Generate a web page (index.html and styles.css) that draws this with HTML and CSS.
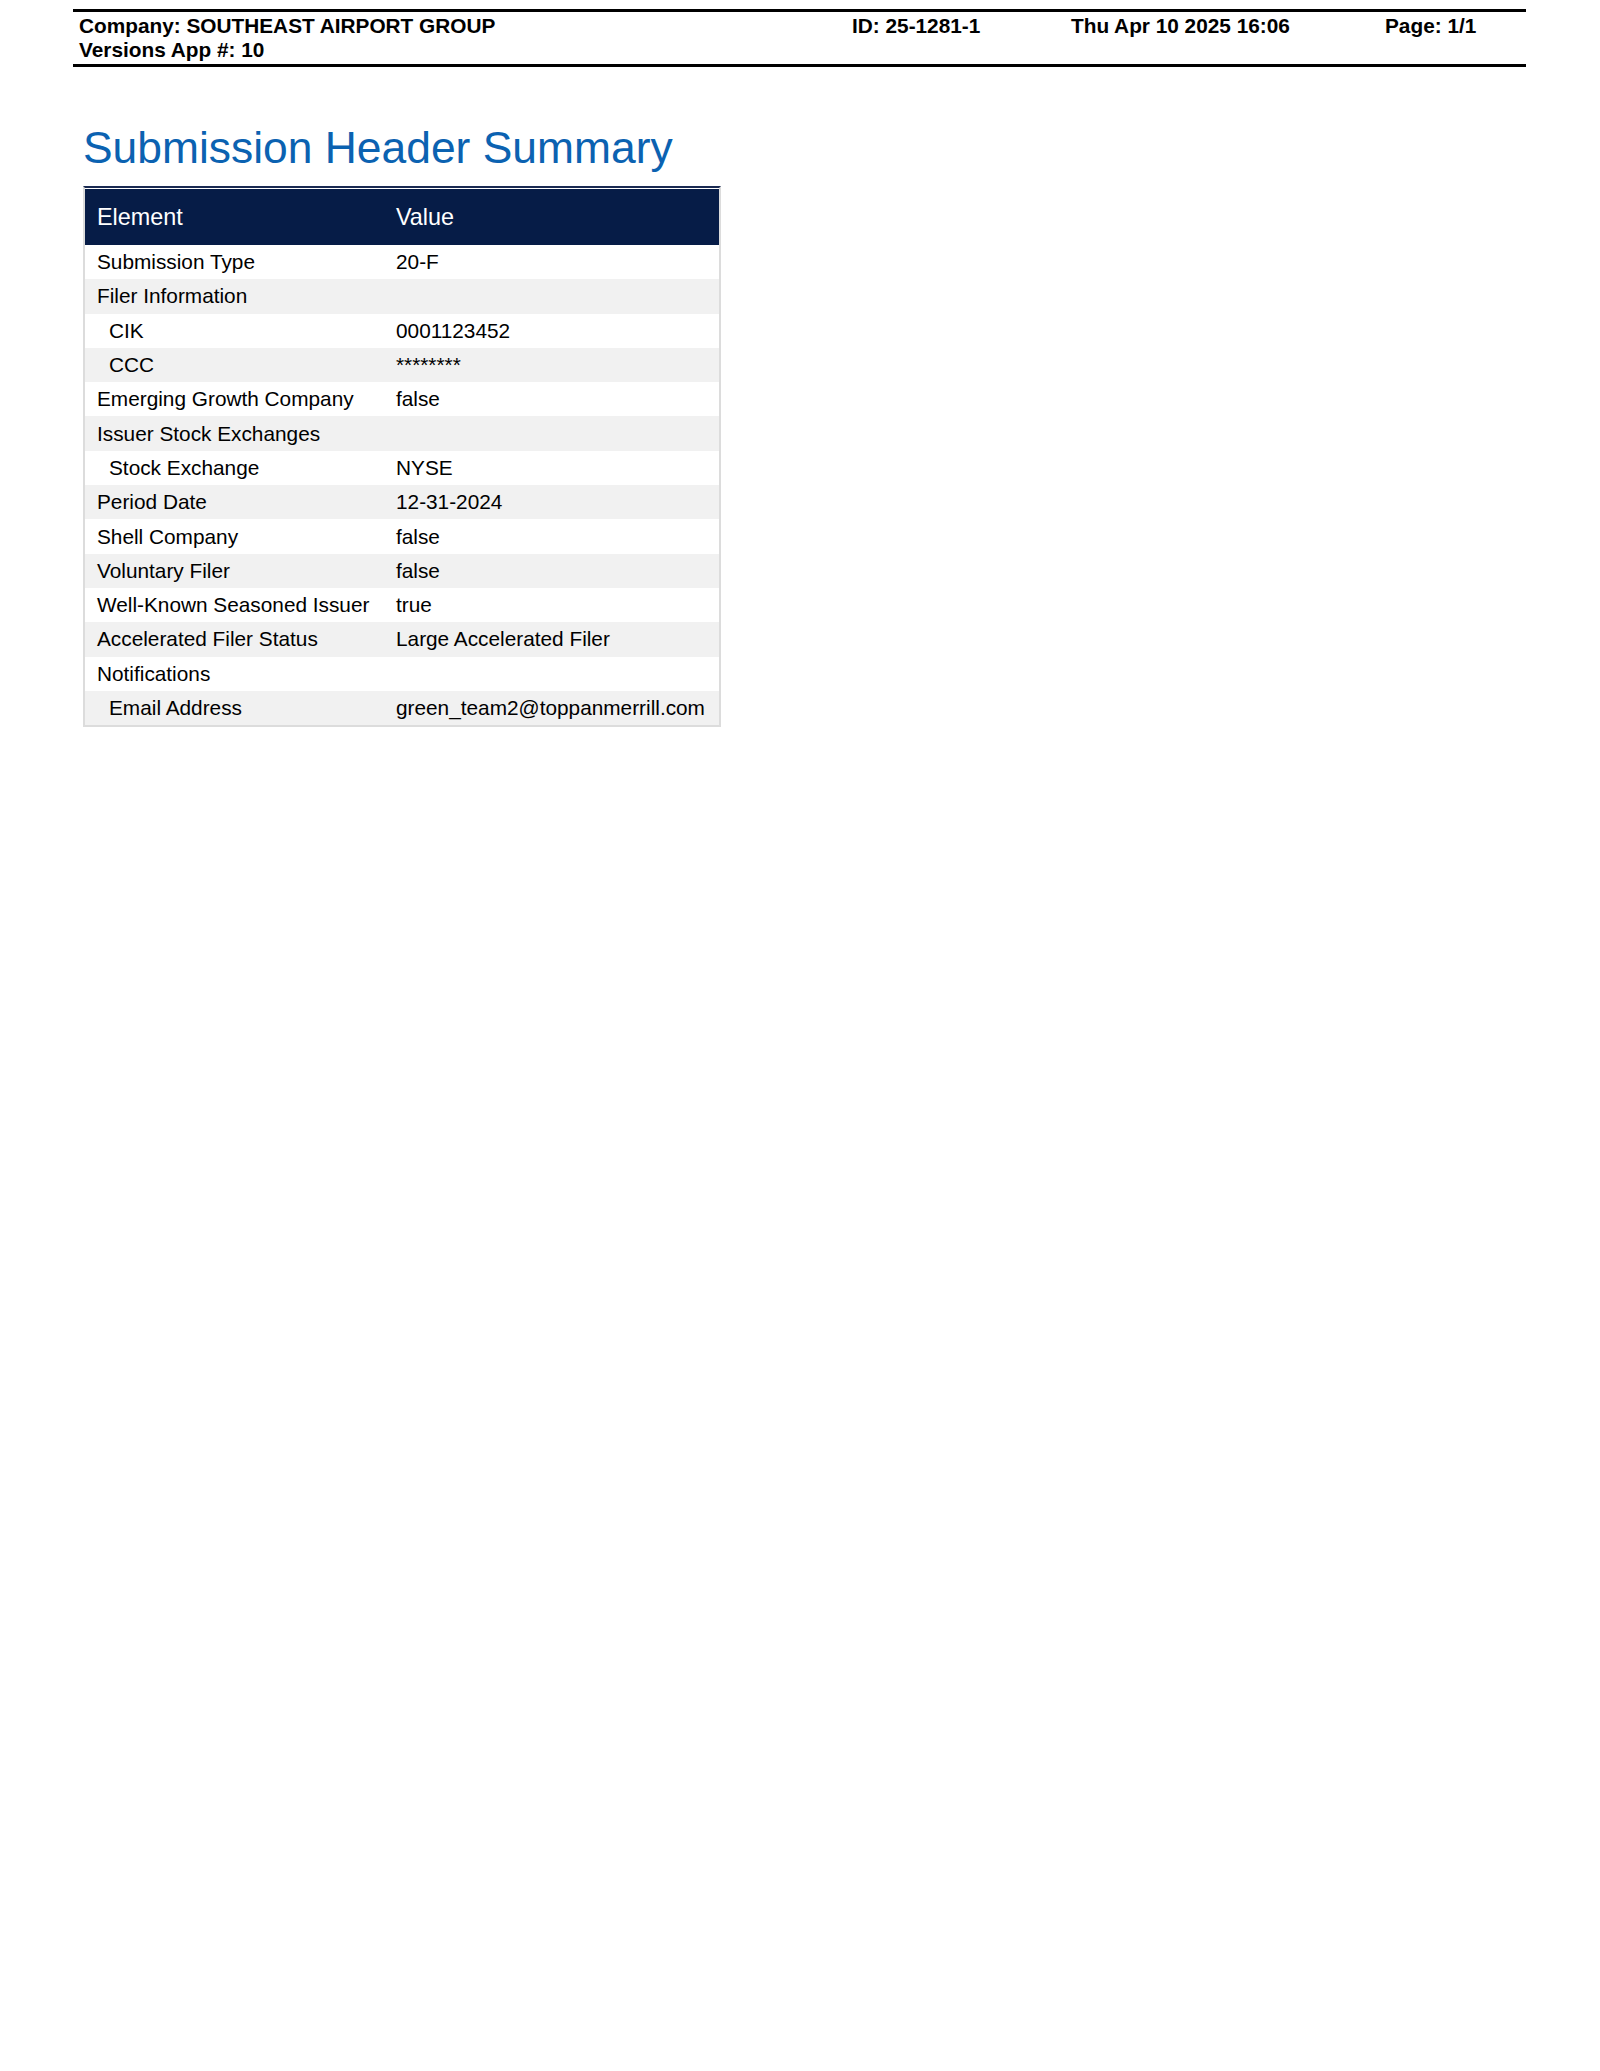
FILE: index.html
```html
<!DOCTYPE html>
<html lang="en">
<head>
<meta charset="utf-8">
<title>Submission Header Summary</title>
<link rel="stylesheet" href="styles.css">
</head>
<body>
<div class="page">
  <header class="doc-header">
    <div class="dh-left">
      <div>Company: SOUTHEAST AIRPORT GROUP</div>
      <div>Versions App #: 10</div>
    </div>
    <div class="dh-id">ID: 25-1281-1</div>
    <div class="dh-date">Thu Apr 10 2025 16:06</div>
    <div class="dh-page">Page: 1/1</div>
  </header>

  <h1 class="title">Submission Header Summary</h1>

  <table class="summary">
    <colgroup>
      <col class="c-el">
      <col class="c-val">
    </colgroup>
    <thead>
      <tr><th>Element</th><th>Value</th></tr>
    </thead>
    <tbody>
      <tr><td>Submission Type</td><td>20-F</td></tr>
      <tr><td>Filer Information</td><td></td></tr>
      <tr><td class="ind">CIK</td><td>0001123452</td></tr>
      <tr><td class="ind">CCC</td><td>********</td></tr>
      <tr><td>Emerging Growth Company</td><td>false</td></tr>
      <tr><td>Issuer Stock Exchanges</td><td></td></tr>
      <tr><td class="ind">Stock Exchange</td><td>NYSE</td></tr>
      <tr><td>Period Date</td><td>12-31-2024</td></tr>
      <tr><td>Shell Company</td><td>false</td></tr>
      <tr><td>Voluntary Filer</td><td>false</td></tr>
      <tr><td>Well-Known Seasoned Issuer</td><td>true</td></tr>
      <tr><td>Accelerated Filer Status</td><td>Large Accelerated Filer</td></tr>
      <tr><td>Notifications</td><td></td></tr>
      <tr><td class="ind">Email Address</td><td>green_team2@toppanmerrill.com</td></tr>
    </tbody>
  </table>
</div>
</body>
</html>
```

FILE: styles.css
```css
html, body {
  margin: 0;
  padding: 0;
  background: #ffffff;
}

body {
  font-family: "Liberation Sans", Arial, sans-serif;
  color: #000;
}

.page {
  padding-top: 9px;
}

.doc-header {
  margin-left: 73px;
  width: 1453px;
  box-sizing: border-box;
  border-top: 3px solid #000;
  border-bottom: 3px solid #000;
  padding: 2px 6px 2px 6px;
  display: grid;
  grid-template-columns: 773px 219px 314px auto;
  font-weight: bold;
  font-size: 20.8px;
  line-height: 24px;
}

.title {
  margin: 56px 0 0 83px;
  font-size: 44.4px;
  font-weight: normal;
  line-height: normal;
  color: #0b62b1;
}

.summary {
  margin: 13px 0 0 83px;
  width: 638px;
  border-collapse: separate;
  border-spacing: 0;
  border: 2px solid #dcdcdc;
  border-top: 2px solid #1a2a52;
  font-size: 20.8px;
  table-layout: fixed;
}

.c-el { width: 299px; }
.c-val { width: auto; }

.summary th {
  background: #061c47;
  color: #fff;
  font-weight: normal;
  font-size: 23.4px;
  text-align: left;
  height: 57px;
  padding: 0 0 0 12px;
  border-top: 1px solid #fff;
  vertical-align: middle;
  box-sizing: border-box;
}

.summary td {
  height: 34.3px;
  padding: 0 0 0 12px;
  line-height: 24px;
  vertical-align: middle;
  white-space: nowrap;
  box-sizing: border-box;
}

.summary tbody tr:nth-child(even) td {
  background: #f1f1f1;
}

.summary td.ind {
  padding-left: 24px;
}
```
